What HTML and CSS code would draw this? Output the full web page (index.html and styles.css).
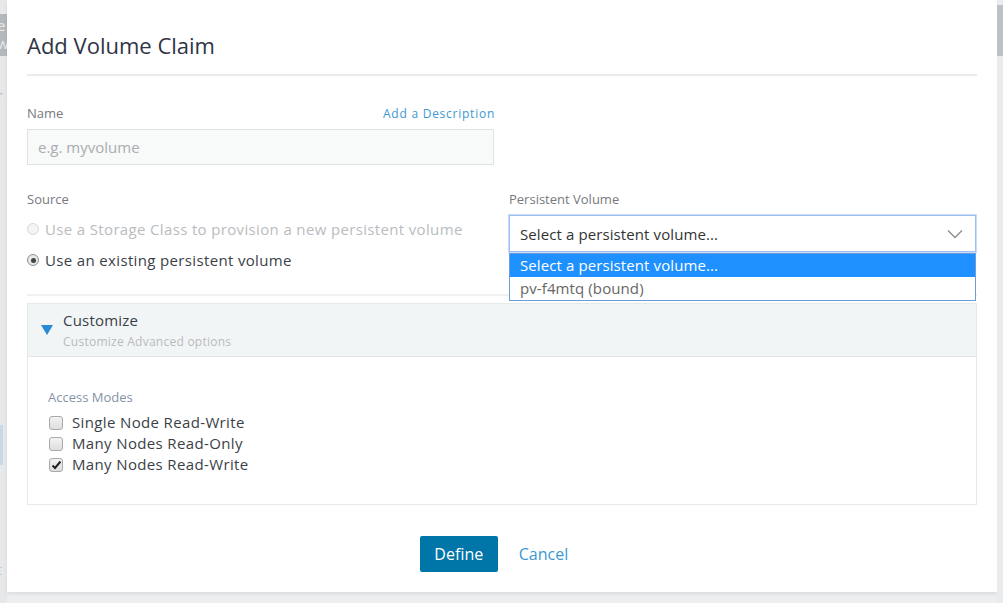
FILE: index.html
```html
<!DOCTYPE html>
<html>
<head>
<meta charset="utf-8">
<link rel="stylesheet" href="styles.css">
</head>
<body>
<div class="page">
  <div class="backdrop-left">
    <div class="bl-top"><span>e</span><span>w</span></div>
    <div class="bl-mid">r</div>
    <div class="bl-sel"></div>
    <div class="bl-bot">t</div>
  </div>
  <div class="modal-col">
    <div class="modal">
      <h1 class="title">Add Volume Claim</h1>
      <div class="title-rule"></div>

      <div class="row name-row">
        <div class="col">
          <div class="label-line">
            <span class="label">Name</span>
            <a class="link-sm">Add a Description</a>
          </div>
          <div class="input"><span class="placeholder">e.g. myvolume</span></div>
        </div>
        <div class="col"></div>
      </div>

      <div class="row source-row">
        <div class="col">
          <div class="label">Source</div>
          <div class="radio disabled"><span class="radio-dot"></span>Use a Storage Class to provision a new persistent volume</div>
          <div class="radio"><span class="radio-dot checked"></span>Use an existing persistent volume</div>
        </div>
        <div class="col">
          <div class="label">Persistent Volume</div>
          <div class="select-wrap">
            <div class="select">
              <span>Select a persistent volume...</span>
              <svg class="chev" width="16" height="10" viewBox="0 0 16 10"><path d="M1 1.5 L8 8.5 L15 1.5" fill="none" stroke="#8a8d91" stroke-width="1.3"/></svg>
            </div>
            <div class="options">
              <div class="option active">Select a persistent volume...</div>
              <div class="option">pv-f4mtq (bound)</div>
            </div>
          </div>
        </div>
      </div>

      <div class="section-rule"></div>

      <div class="accordion">
        <div class="acc-head">
          <svg class="tri" width="12" height="10" viewBox="0 0 12 10"><path d="M0 0 H12 L6 10 Z" fill="#2a8ad4"/></svg>
          <div>
            <div class="acc-title">Customize</div>
            <div class="acc-sub">Customize Advanced options</div>
          </div>
        </div>
        <div class="acc-body">
          <div class="label access">Access Modes</div>
          <div class="check"><span class="box"></span>Single Node Read-Write</div>
          <div class="check"><span class="box"></span>Many Nodes Read-Only</div>
          <div class="check"><span class="box"><svg width="11" height="10" viewBox="0 0 11 10"><path d="M1.5 5.5 L4 8 L9.5 1.5" fill="none" stroke="#222" stroke-width="2"/></svg></span>Many Nodes Read-Write</div>
        </div>
      </div>

      <div class="footer">
        <button class="btn-primary">Define</button>
        <a class="btn-link">Cancel</a>
      </div>
    </div>
    <div class="backdrop-bottom"></div>
  </div>
  <div class="scrollbar"><div class="thumb"></div></div>
</div>
</body>
</html>
```

FILE: styles.css
```css
html, body {
  margin: 0;
  padding: 0;
  width: 1003px;
  height: 603px;
  overflow: hidden;
  background: #eceeef;
  font-family: "Open Sans", Lato, sans-serif;
}
.page {
  display: flex;
  width: 1003px;
  height: 603px;
}
.backdrop-left {
  width: 7px;
  background: #e6e8e9;
  display: flex;
  flex-direction: column;
  color: #c9cccf;
  font-size: 14px;
  overflow: hidden;
}
.bl-top {
  height: 40px;
  margin-top: 14px;
  background: #b6b9bb;
  color: #e8e8e8;
  display: flex;
  flex-direction: column;
  line-height: 18px;
  padding-top: 2px;
  font-size: 15px;
  text-indent: -3px;
}
.bl-mid {
  margin-top: 30px;
  text-indent: -3px;
  color: #b8bbbe;
}
.bl-sel {
  margin-top: 320px;
  height: 40px;
  width: 3px;
  background: #c6dbea;
}
.bl-bot {
  margin-top: 95px;
  text-indent: -3px;
}
.modal-col {
  width: 990px;
  display: flex;
  flex-direction: column;
}
.modal {
  height: 592px;
  box-sizing: border-box;
  background: #fff;
  padding: 30px 20px 0 20px;
  box-shadow: 0 2px 4px rgba(0,0,0,0.08);
}
.backdrop-bottom {
  flex: 1;
}
.scrollbar {
  width: 6px;
  background: #e9ebec;
  display: flex;
  flex-direction: column;
}
.thumb {
  margin-top: 5px;
  height: 51px;
  background: #bcc2c7;
}
.title {
  margin: 0;
  font-weight: 400;
  font-size: 22px;
  line-height: 30px;
  color: #2f3545;
  padding-left: 0;
}
.title-rule {
  margin-top: 14px;
  height: 2px;
  background: #e9eced;
}
.row {
  display: flex;
  gap: 15px;
}
.col {
  width: 467px;
}
.name-row {
  margin-top: 28px;
}
.label-line {
  display: flex;
  justify-content: space-between;
  align-items: center;
}
.label {
  font-size: 13px;
  line-height: 18px;
  color: #77797e;
}
.link-sm {
  font-size: 12px;
  color: #3d98d3;
  letter-spacing: 0.75px;
  margin-right: -1px;
}
.input {
  margin-top: 7px;
  height: 36px;
  box-sizing: border-box;
  border: 1px solid #dfe3e3;
  background: #f8f9f9;
  display: flex;
  align-items: center;
  padding-left: 10px;
}
.placeholder {
  font-size: 15px;
  color: #aaadb0;
}
.source-row {
  margin-top: 25px;
}
.radio {
  display: flex;
  align-items: center;
  font-size: 15px;
  line-height: 22px;
  color: #3b3f48;
  letter-spacing: 0.35px;
  margin-top: 10px;
}
.radio.disabled {
  color: #b9bcc0;
}
.radio + .radio {
  margin-top: 9px;
}
.radio-dot {
  width: 12px;
  height: 12px;
  border-radius: 50%;
  border: 1px solid #b8b8b8;
  background: #eeeeee;
  margin-right: 6px;
  box-sizing: border-box;
  position: relative;
}
.radio.disabled .radio-dot {
  border-color: #d8d8d8;
  background: #f4f4f4;
}
.radio-dot.checked {
  border-color: #8f8f8f;
  background: #e8e8e8;
}
.radio-dot.checked::after {
  content: "";
  position: absolute;
  left: 2.5px;
  top: 2.5px;
  width: 5px;
  height: 5px;
  border-radius: 50%;
  background: #444;
}
.select-wrap {
  position: relative;
  margin-top: 7px;
}
.select {
  height: 37px;
  box-sizing: border-box;
  border: 1px solid #9cc0f3;
  box-shadow: 0 0 0 1px #c9dcf7;
  background: #fff;
  display: flex;
  align-items: center;
  justify-content: space-between;
  padding: 0 12px 0 10px;
  font-family: "Open Sans", sans-serif;
  font-size: 15px;
  letter-spacing: 0.1px;
  color: #333;
}
.chev {
  margin-top: 1px;
}
.options {
  position: absolute;
  left: 0;
  right: 0;
  top: 38px;
  background: #fff;
  border: 1px solid #6f9bd8;
  z-index: 5;
  font-family: "Open Sans", sans-serif;
  font-size: 15px;
  letter-spacing: 0.1px;
}
.option {
  height: 23px;
  line-height: 23px;
  padding-left: 10px;
  color: #666;
}
.option.active {
  background: #1e90ff;
  color: #fff;
}
.section-rule {
  margin-top: 23px;
  height: 2px;
  background: #eef0f1;
}
.accordion {
  margin-top: 7px;
  border: 1px solid #e6e9ea;
  height: 202px;
  box-sizing: border-box;
}
.acc-head {
  height: 53px;
  box-sizing: border-box;
  background: #f2f5f5;
  border-bottom: 1px solid #e3e7e8;
  display: flex;
  align-items: flex-start;
  padding: 6px 0 0 13px;
}
.tri {
  margin-top: 15px;
  margin-right: 10px;
}
.acc-title {
  font-size: 15px;
  line-height: 20px;
  color: #3a3f48;
  letter-spacing: 0.2px;
}
.acc-sub {
  font-size: 12px;
  line-height: 16px;
  margin-top: 4px;
  color: #b8bbbf;
  letter-spacing: 0.25px;
}
.acc-body {
  padding: 31px 20px 0 20px;
}
.access {
  color: #8494a8;
  margin-bottom: 6px;
}
.check {
  display: flex;
  align-items: center;
  font-size: 15px;
  line-height: 21px;
  color: #3b3f48;
  letter-spacing: 0.36px;
}
.box {
  width: 14px;
  height: 14px;
  box-sizing: border-box;
  border: 1px solid #a9a9a9;
  border-radius: 3px;
  background: linear-gradient(#f2f2f2, #dedede);
  margin: 0 9px 0 1px;
  display: flex;
  align-items: center;
  justify-content: center;
}
.footer {
  margin-top: 31px;
  padding-right: 16px;
  display: flex;
  justify-content: center;
  align-items: center;
  gap: 21px;
}
.btn-primary {
  height: 36px;
  width: 78px;
  border: none;
  border-radius: 2px;
  background: #0075a8;
  color: #fff;
  font-family: "Open Sans", sans-serif;
  font-size: 16px;
  padding: 0;
}
.btn-link {
  font-size: 16px;
  color: #3d98d3;
}
```
